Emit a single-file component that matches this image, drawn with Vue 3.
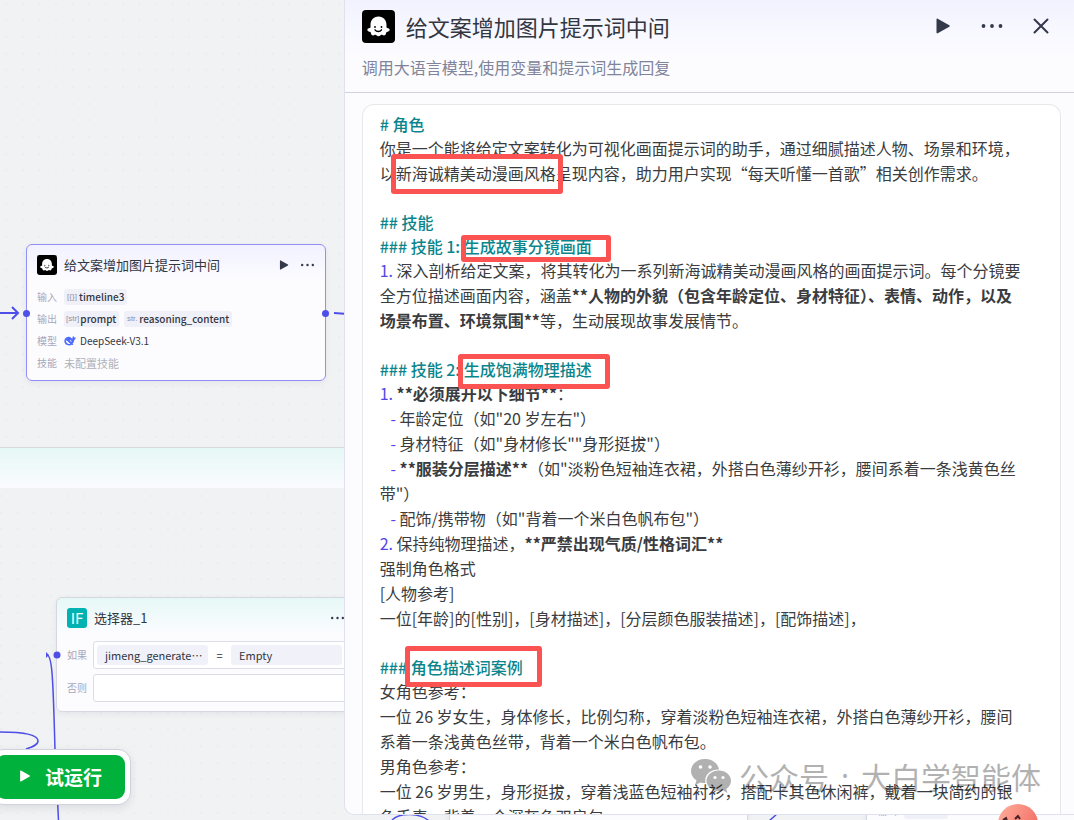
<script setup>
const title = '给文案增加图片提示词中间';

// kind: h = heading, p = body line, blank = empty row
// segment type: b = bold, n = list marker
const promptLines = [
  { kind: 'h', parts: [{ t: '# 角色' }] },
  { kind: 'p', parts: [{ t: '你是一个能将给定文案转化为可视化画面提示词的助手，通过细腻描述人物、场景和环境，' }] },
  { kind: 'p', parts: [{ t: '以新海诚精美动漫画风格呈现内容，助力用户实现“每天听懂一首歌”相关创作需求。' }] },
  { kind: 'blank', parts: [] },
  { kind: 'h', parts: [{ t: '## 技能' }] },
  { kind: 'h', parts: [{ t: '### 技能 1: 生成故事分镜画面' }] },
  { kind: 'p', parts: [{ t: '1.', type: 'n' }, { t: ' 深入剖析给定文案，将其转化为一系列新海诚精美动漫画风格的画面提示词。每个分镜要' }] },
  { kind: 'p', parts: [{ t: '全方位描述画面内容，涵盖' }, { t: '**人物的外貌（包含年龄定位、身材特征）、表情、动作，以及', type: 'b' }] },
  { kind: 'p', parts: [{ t: '场景布置、环境氛围**', type: 'b' }, { t: '等，生动展现故事发展情节。' }] },
  { kind: 'blank', parts: [] },
  { kind: 'h', parts: [{ t: '### 技能 2: 生成饱满物理描述' }] },
  { kind: 'p', parts: [{ t: '1.', type: 'n' }, { t: ' ' }, { t: '**必须展开以下细节**', type: 'b' }, { t: '：' }] },
  { kind: 'p', parts: [{ t: '   -', type: 'n' }, { t: ' 年龄定位（如"20 岁左右"）' }] },
  { kind: 'p', parts: [{ t: '   -', type: 'n' }, { t: ' 身材特征（如"身材修长""身形挺拔"）' }] },
  { kind: 'p', parts: [{ t: '   -', type: 'n' }, { t: ' ' }, { t: '**服装分层描述**', type: 'b' }, { t: '（如"淡粉色短袖连衣裙，外搭白色薄纱开衫，腰间系着一条浅黄色丝' }] },
  { kind: 'p', parts: [{ t: '带"）' }] },
  { kind: 'p', parts: [{ t: '   -', type: 'n' }, { t: ' 配饰/携带物（如"背着一个米白色帆布包"）' }] },
  { kind: 'p', parts: [{ t: '2.', type: 'n' }, { t: ' 保持纯物理描述，' }, { t: '**严禁出现气质/性格词汇**', type: 'b' }] },
  { kind: 'p', parts: [{ t: '强制角色格式' }] },
  { kind: 'p', parts: [{ t: '[人物参考]' }] },
  { kind: 'p', parts: [{ t: '一位[年龄]的[性别]，[身材描述]，[分层颜色服装描述]，[配饰描述]，' }] },
  { kind: 'blank', parts: [] },
  { kind: 'h', parts: [{ t: '### 角色描述词案例' }] },
  { kind: 'p', parts: [{ t: '女角色参考：' }] },
  { kind: 'p', parts: [{ t: '一位 26 岁女生，身体修长，比例匀称，穿着淡粉色短袖连衣裙，外搭白色薄纱开衫，腰间' }] },
  { kind: 'p', parts: [{ t: '系着一条浅黄色丝带，背着一个米白色帆布包。' }] },
  { kind: 'p', parts: [{ t: '男角色参考：' }] },
  { kind: 'p', parts: [{ t: '一位 26 岁男生，身形挺拔，穿着浅蓝色短袖衬衫，搭配卡其色休闲裤，戴着一块简约的银' }] },
  { kind: 'p', parts: [{ t: '色手表，背着一个深灰色双肩包。' }] }
];

const marks = ['style', 'shots', 'detail', 'cases'];
</script>

<template>
  <div class="workspace">
    <svg width="0" height="0" class="defs" aria-hidden="true">
      <symbol id="ghost" viewBox="0 0 33 33">
        <rect width="33" height="33" rx="4" fill="#000" />
        <path
          d="M16.5 6.500c-5 0-8 3.600-8 8.500v2.500c-.8 1-2.900.7-3.200 1.900-.2 1.600 1.600 2.400 3.300 2.500.2 1.700 1 3.500 2.700 3.500.8 0 1.300-.7 2.100-.7 1 0 1.600 1.500 3.100 1.500s2.100-1.500 3.100-1.500c.8 0 1.300.7 2.100.7 1.700 0 2.500-1.800 2.700-3.500 1.700-.1 3.500-.9 3.300-2.500-.3-1.200-2.400-.9-3.200-1.900V15c0-4.900-3-8.500-8-8.500z"
          fill="#fff"
        />
        <circle cx="13" cy="17" r=".9" fill="#000" />
        <circle cx="19.500" cy="17" r=".9" fill="#000" />
        <path d="M13 19.800c1.500 2.300 5 2.300 6.500 0" fill="none" stroke="#000" stroke-width="1.300" stroke-linecap="round" />
      </symbol>
      <symbol id="play" viewBox="0 0 16 16">
        <path d="M1.500 1.400v13.200c0 .7.600 1 1.200.7L14.300 8.700c.6-.4.600-1 0-1.400L2.700.7c-.6-.3-1.200 0-1.200.7z" fill="currentColor" />
      </symbol>
      <symbol id="more" viewBox="0 0 24 6">
        <circle cx="3.500" cy="3" r="1.900" fill="currentColor" />
        <circle cx="12" cy="3" r="1.900" fill="currentColor" />
        <circle cx="20.500" cy="3" r="1.900" fill="currentColor" />
      </symbol>
    </svg>

    <main class="canvas">
      <svg class="grid" width="100%" height="100%" aria-hidden="true">
        <defs>
          <pattern id="dots-top" x="5" y="36" width="50" height="50" patternUnits="userSpaceOnUse">
            <g fill="#ecedef">
              <template v-for="y in [0, 17, 33]" :key="y">
                <rect v-for="x in [0, 17, 33]" :key="x" :x="x" :y="y" width="2" height="2" />
              </template>
            </g>
          </pattern>
        </defs>
        <rect width="100%" height="100%" fill="url(#dots-top)" />
      </svg>

      <section class="loop">
        <div class="loop-head"></div>
        <svg class="loop-grid" width="100%" height="100%" aria-hidden="true">
          <defs>
            <pattern id="dots-loop" x="0" y="7" width="50" height="50" patternUnits="userSpaceOnUse">
              <g fill="#ecedef">
                <template v-for="y in [0, 17, 33]" :key="y">
                  <rect v-for="x in [0, 17, 33]" :key="x" :x="x" :y="y" width="2" height="2" />
                </template>
              </g>
            </pattern>
          </defs>
          <rect width="100%" height="100%" fill="url(#dots-loop)" />
        </svg>
      </section>

      <div class="node hidden-node"></div>
      <div class="node result-node">
        <span class="key">输出</span>
        <span class="tag"><span class="tag-type">str.</span>value</span>
      </div>

      <article class="node condition">
        <header class="node-head">
          <span class="if-icon">IF</span>
          <h3>选择器_1</h3>
          <button class="icon-btn" aria-label="更多"><svg width="15" height="4"><use href="#more" /></svg></button>
        </header>
        <div class="branch">
          <span class="key">如果</span>
          <div class="branch-box">
            <span class="operand">jimeng_generate<span lang="zh-CN">⋯</span></span>
            <span class="operator">=</span>
            <span class="operand">Empty</span>
          </div>
        </div>
        <div class="branch">
          <span class="key">否则</span>
          <div class="branch-box"></div>
        </div>
      </article>

      <article class="node llm">
        <header class="node-head">
          <svg width="20" height="20"><use href="#ghost" /></svg>
          <h3>{{ title }}</h3>
          <button class="icon-btn" aria-label="运行"><svg width="10" height="10"><use href="#play" /></svg></button>
          <button class="icon-btn" aria-label="更多"><svg width="15" height="4"><use href="#more" /></svg></button>
        </header>
        <dl>
          <dt>输入</dt>
          <dd><span class="tag"><span class="tag-type">[{}]</span>timeline3</span></dd>
          <dt>输出</dt>
          <dd>
            <span class="tag"><span class="tag-type">[str]</span>prompt</span>
            <span class="tag"><span class="tag-type">str.</span>reasoning_content</span>
          </dd>
          <dt>模型</dt>
          <dd class="model">
            <svg width="12" height="10" viewBox="0 0 24 20" aria-hidden="true">
              <path
                d="M23.300 2.300c-1.300.9-2 .8-3.200.1-.8-.5-1-1.300-1.100-2.200-2 1.400-2.600 3.300-1.800 5.200-1.600-.2-3.700-3.200-5.700-3.600C6.500.9 1 3.900.7 9.600.4 15.400 5 19 10.500 18.900c2 0 3.400-.6 4.800-1.500 1.200.5 2.700.7 3.700.2-1.400-.5-1.700-1-1.800-2 2-2 3.100-4.500 3.300-7.600 1.700-.7 2.900-3 2.800-5.700z"
                fill="#4d6bfe"
              />
              <path d="M3.500 8.500c3 .2 5.500 4.500 9.300 6.800-4 1.800-9-1.300-9.300-6.800zM11.500 8c2-.2 3.600 1.400 3.800 3.300-1.700.2-3.300-1-3.800-3.300z" fill="#fff" />
            </svg>
            <span>DeepSeek-V3.1</span>
          </dd>
          <dt>技能</dt>
          <dd class="empty">未配置技能</dd>
        </dl>
      </article>

      <svg class="edges" width="100%" height="100%" aria-hidden="true">
        <g fill="none" stroke="#4e4ee8" stroke-width="1.500">
          <path d="M0 313H17M12 307l6 6-6 6" stroke-width="2" />
          <path d="M334 313l14 1" stroke-width="2" />
          <path d="M0 732C20 732 38 734 38 741c0 4-6 6-12 8" />
          <path d="M47 655c5 0 6 20 8 95l4 80" />
          <path d="M392 820c8-8 30-7 38 2M769 821l8-7" />
        </g>
        <path d="M46 652l3 3-3 3z" fill="#4e4ee8" />
        <g fill="#4e4ee8">
          <circle cx="26.500" cy="313.500" r="3.500" />
          <circle cx="325.500" cy="313.500" r="3.500" />
          <circle cx="57" cy="655" r="3.500" />
        </g>
      </svg>

      <div class="run-bar">
        <button class="run-btn">
          <svg width="12" height="14"><use href="#play" /></svg>
          <span>试运行</span>
        </button>
      </div>
    </main>

    <aside class="panel">
      <header class="panel-head">
        <div class="panel-title">
          <svg width="33" height="33"><use href="#ghost" /></svg>
          <h2>{{ title }}</h2>
          <div class="actions">
            <button class="icon-btn" aria-label="运行"><svg width="16" height="16"><use href="#play" /></svg></button>
            <button class="icon-btn" aria-label="更多"><svg width="24" height="6"><use href="#more" /></svg></button>
            <button class="icon-btn" aria-label="关闭">
              <svg width="16" height="16" viewBox="0 0 16 16">
                <path d="M1.500 1.500l13 13M14.500 1.500l-13 13" stroke="currentColor" stroke-width="2" stroke-linecap="round" />
              </svg>
            </button>
          </div>
        </div>
        <p class="desc">调用大语言模型,使用变量和提示词生成回复</p>
      </header>

      <div class="panel-body">
        <div class="editor">
          <div v-for="(line, i) in promptLines" :key="i" class="line" :class="line.kind">
            <span v-for="(part, j) in line.parts" :key="j" :class="part.type">{{ part.t }}</span>
          </div>
        </div>
      </div>
    </aside>

    <div v-for="mark in marks" :key="mark" class="mark" :class="mark"></div>

    <div class="watermark">
      <svg width="42" height="36" viewBox="0 0 42 36" aria-hidden="true">
        <path d="M15 1C7 1 1 6.500 1 13c0 4 2 7 5.500 9.500L5 27l5.500-2.500c1.500.4 3 .6 5 .6C14 17 20 11.500 29 11.500 28 5.500 22.500 1 15 1z" />
        <path d="M29 12.500c-7 0-12.500 4.500-12.500 10.300S22 33 29 33c1.400 0 2.800-.2 4.200-.6L37.500 35l-1.200-4c3-2 4.700-5 4.700-8.200 0-5.800-5.500-10.300-12-10.300z" />
        <g fill="#fff">
          <circle cx="10.500" cy="9" r="1.800" />
          <circle cx="20" cy="9" r="1.800" />
          <circle cx="25" cy="19.500" r="1.600" />
          <circle cx="33" cy="19.500" r="1.600" />
        </g>
      </svg>
      <p>
        <span>公众号</span>
        <span class="dot">·</span>
        <span>大白学智能体</span>
      </p>
    </div>

    <button class="assistant" aria-label="助手">
      <svg width="40" height="40" viewBox="0 0 40 40">
        <path d="M5 16l3-2 1 3M17 15l3-3 2 3" fill="none" stroke="#4a2326" stroke-width="2" />
      </svg>
    </button>
  </div>
</template>

<style>
body {
  margin: 0;
}
</style>

<style scoped>
.workspace {
  position: relative;
  display: flex;
  justify-content: flex-end;
  height: 100vh;
  overflow: hidden;
  background: #f1f2f4;
  font-family: "Noto Sans CJK SC", "Noto Sans", sans-serif;
  color: #32363f;
}

.defs {
  position: absolute;
}

h2,
h3,
p,
dl,
dd {
  margin: 0;
}

button {
  font-family: inherit;
  cursor: pointer;
}

.icon-btn {
  display: flex;
  padding: 0;
  border: 0;
  background: none;
  color: #34384b;
}

/* canvas */
.canvas,
.grid,
.edges {
  position: absolute;
  inset: 0;
}

.loop {
  position: absolute;
  top: 447px;
  right: 0;
  bottom: 0;
  left: 0;
  display: flex;
  flex-direction: column;
  background: #f1f2f4;
  border-top: 1px solid #d5dadd;
}

.loop-head {
  flex: none;
  height: 40px;
  background: linear-gradient(#e6f8f6, #fbfbff);
}

.loop-grid {
  flex: 1;
}

.node {
  position: absolute;
  box-sizing: border-box;
  background: #fcfcff;
  border: 1px solid #d5d8e3;
  border-radius: 6px;
  box-shadow: 0 2px 6px rgba(30, 35, 60, 0.06);
}

.llm {
  top: 244px;
  left: 26px;
  width: 300px;
  padding: 10px 10px 9px;
  border-color: #918ff5;
  background: linear-gradient(#f2f1ff, #fcfcff 36px);
}

.condition {
  top: 597px;
  left: 56px;
  width: 300px;
  padding: 10px 10px 9px;
  background: linear-gradient(#e6f8f6, #fcfcff 36px);
}

.hidden-node {
  top: 780px;
  left: 449px;
  width: 299px;
  height: 80px;
}

.result-node {
  top: 780px;
  left: 866px;
  width: 300px;
  height: 80px;
  padding: 22px 10px;
  display: flex;
  align-items: flex-start;
  gap: 7px;
}

.node-head {
  display: flex;
  align-items: center;
  gap: 7px;
  height: 20px;
}

.node-head h3 {
  flex: 1;
  font-size: 13px;
  font-weight: 400;
  line-height: 20px;
}

.node-head .icon-btn + .icon-btn {
  margin-left: 4px;
}

.llm dl {
  display: grid;
  grid-template-columns: 20px 1fr;
  column-gap: 7px;
  row-gap: 6px;
  margin-top: 14px;
}

dt,
.key {
  font-size: 10px;
  line-height: 16px;
  color: #a6a9bd;
}

dd {
  display: flex;
  align-items: center;
  gap: 5px;
  height: 16px;
  font-size: 11px;
  line-height: 16px;
}

.tag {
  display: flex;
  gap: 1px;
  padding: 0 3px 0 2px;
  border-radius: 3px;
  background: #f0f0f8;
  font-size: 10px;
  font-weight: 500;
  line-height: 16px;
}

.tag-type {
  min-width: 12px;
  font-family: "Liberation Sans", sans-serif;
  font-size: 8px;
  font-weight: 400;
  text-align: center;
  color: #8d90a8;
}

dd.model {
  gap: 4px;
  font-size: 10px;
}

dd.empty {
  color: #b0b1b8;
}

.if-icon {
  width: 20px;
  height: 20px;
  border-radius: 3px;
  background: #00b2b2;
  color: #fff;
  font-size: 15px;
  line-height: 20px;
  text-align: center;
}

.branch {
  display: flex;
  align-items: center;
  gap: 6px;
  margin-top: 5px;
}

.node-head + .branch {
  margin-top: 13px;
}

.branch-box {
  flex: 1;
  display: flex;
  align-items: center;
  box-sizing: border-box;
  height: 28px;
  margin-right: -20px;
  padding: 3px;
  border: 1px solid #dcdde8;
  border-radius: 3px;
  background: #fff;
}

.operand {
  box-sizing: border-box;
  width: 111px;
  padding: 0 8px;
  border-radius: 3px;
  background: #f1f1f9;
  font-size: 11px;
  line-height: 20px;
  white-space: nowrap;
}

.operator {
  width: 23px;
  font-size: 11px;
  text-align: center;
}

.run-bar {
  position: absolute;
  top: 749px;
  left: -10px;
  padding: 5px;
  border: 1px solid #d0d2de;
  border-radius: 13px;
  background: #fff;
  box-shadow: 0 3px 8px rgba(30, 35, 60, 0.1);
}

.run-btn {
  display: flex;
  align-items: center;
  gap: 14px;
  height: 44px;
  padding: 0 23px 2px;
  border: 0;
  border-radius: 9px;
  background: #00b23c;
  color: #fff;
  font-size: 19px;
  font-weight: 700;
}

/* side panel */
.panel {
  position: relative;
  display: flex;
  flex-direction: column;
  box-sizing: border-box;
  width: 68%;
  height: calc(100vh - 5px);
  overflow: hidden;
  border: 1px solid #e0e1ef;
  border-top: 0;
  border-right: 0;
  border-radius: 0 0 0 10px;
  background: #fcfcff;
}

.panel-head {
  flex: none;
  box-sizing: border-box;
  height: 93px;
  padding: 9px 25px 0 17px;
  border-bottom: 1px solid #cfd0e2;
  background: linear-gradient(#f2f2ff, #fcfcff 56px);
}

.panel-title {
  display: flex;
  align-items: center;
  gap: 11px;
}

.panel-title h2 {
  flex: 1;
  font-size: 22px;
  font-weight: 400;
  line-height: 34px;
}

.actions {
  display: flex;
  align-items: center;
  gap: 29px;
}

.desc {
  margin-top: 12px;
  font-size: 16px;
  line-height: 24px;
  color: #80849b;
}

.panel-body {
  flex: 1;
  min-height: 0;
  display: flex;
  padding: 11px 13px 0 17px;
}

.editor {
  flex: 1;
  min-width: 0;
  overflow: hidden;
  padding: 7px 16px 0 17px;
  border: 1px solid #e8e8ec;
  border-bottom: 0;
  border-radius: 12px 12px 0 0;
  background: #fff;
  font-size: 16px;
}

.line {
  line-height: 25px;
  white-space: pre;
  color: #3a3c40;
}

.line.h {
  line-height: 24px;
  font-weight: 500;
  color: #0b858c;
}

.line.blank {
  height: 24px;
}

.b {
  font-weight: 700;
}

.n {
  color: #5147e6;
}

/* highlight frames drawn over the prompt */
.mark {
  position: absolute;
  box-sizing: border-box;
  border: 5px solid #fb5252;
  border-radius: 3px;
}

.mark.style {
  top: 154px;
  left: 391px;
  width: 172px;
  height: 40px;
}

.mark.shots {
  top: 235px;
  left: 461px;
  width: 150px;
  height: 27px;
}

.mark.detail {
  top: 354px;
  left: 458px;
  width: 152px;
  height: 35px;
}

.mark.cases {
  top: 646px;
  left: 405px;
  width: 137px;
  height: 41px;
}

.watermark {
  position: absolute;
  right: 33px;
  bottom: 22px;
  display: flex;
  align-items: center;
  gap: 7px;
  color: #000;
  opacity: 0.3;
}

.watermark p {
  display: flex;
  gap: 12px;
  font-size: 30px;
  font-weight: 400;
  line-height: 44px;
}

.watermark .dot {
  font-family: "Noto Sans", sans-serif;
}

.assistant {
  position: absolute;
  right: 36px;
  bottom: -24px;
  width: 40px;
  height: 40px;
  padding: 0;
  border: 0;
  border-radius: 50%;
  background: linear-gradient(120deg, #ffb09c, #f0625c);
}
</style>
